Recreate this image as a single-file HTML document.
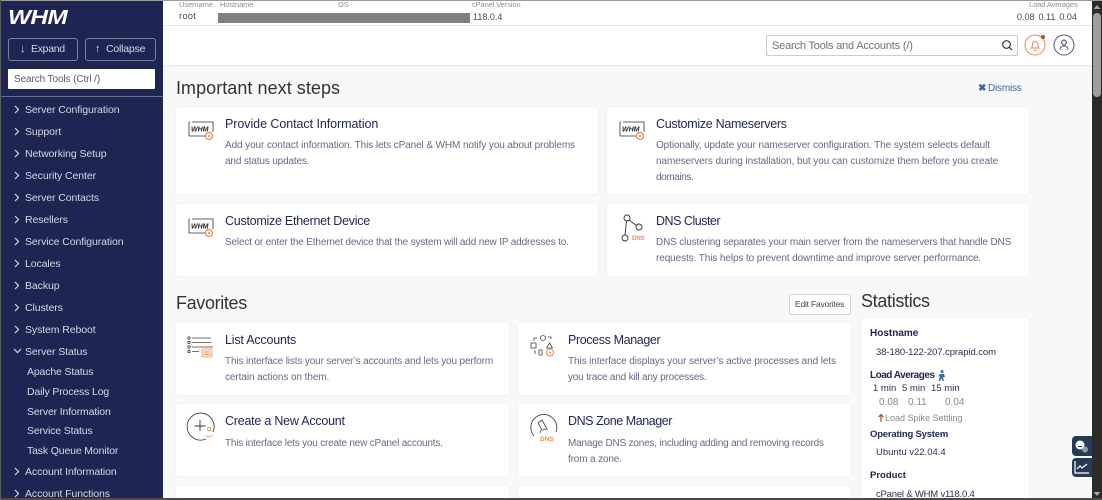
<!DOCTYPE html>
<html><head><meta charset="utf-8"><style>
html,body{margin:0;padding:0;width:1102px;height:500px;overflow:hidden;background:#f8f8f8}
body{font-family:"Liberation Sans",sans-serif;position:relative}
.a{position:absolute}
.t{position:absolute;white-space:nowrap;line-height:16px}
.s{font-size:10.5px;letter-spacing:-.09px;color:#d5d7e4;left:25px}
.u{font-size:10.5px;letter-spacing:-.15px;color:#d5d7e4;left:27px}
.card{position:absolute;background:#fff;border-radius:3px;box-shadow:0 0 3px rgba(0,0,0,.05)}
.h{font-size:12.5px;color:#1f2553}
.d{font-size:10px;letter-spacing:-.13px;color:#646a86}
.l{font-size:7.5px;color:#8d8d8d;letter-spacing:-.1px;top:-3px}
.st{font-size:9.5px;color:#2c3050}
.sb{font-size:10px;color:#1f2553;font-weight:bold}
svg{position:absolute;overflow:visible}
</style></head><body>
<!-- sidebar -->
<div class="a" style="left:0;top:0;width:163px;height:500px;background:#1f2553"></div>
<div class="t" style="left:8px;top:6px;font-size:20px;line-height:24px;font-weight:bold;font-style:italic;color:#fff;letter-spacing:-.5px;transform:scaleX(1.22);transform-origin:left">WHM</div>
<div class="a" style="left:8px;top:38px;width:68px;height:21px;border:1px solid #79809f;border-radius:3px"></div>
<div class="a" style="left:85px;top:38px;width:69px;height:21px;border:1px solid #79809f;border-radius:3px"></div>
<div class="t" style="left:20px;top:41px;font-size:11px;color:#d5d7e4">↓</div>
<div class="t" style="left:31px;top:41px;font-size:10.5px;color:#d5d7e4;letter-spacing:-.3px">Expand</div>
<div class="t" style="left:95px;top:41px;font-size:11px;color:#d5d7e4">↑</div>
<div class="t" style="left:106px;top:41px;font-size:10.5px;color:#d5d7e4;letter-spacing:-.2px">Collapse</div>
<div class="a" style="left:8px;top:69px;width:147px;height:20px;background:#fff;border-radius:1px"></div>
<div class="t" style="left:14px;top:72px;font-size:10px;color:#555a73;letter-spacing:-.1px">Search Tools (Ctrl /)</div>
<div class="a" style="left:0;top:96px;width:163px;height:1px;background:#6a7092"></div>
<svg width="163" height="500" style="left:0;top:0" fill="none" stroke="#d5d7e4" stroke-width="1.200">
<path d="M15 106l3.500 3.500-3.500 3.500M15 128l3.500 3.500-3.500 3.500M15 150l3.500 3.500-3.500 3.500M15 172l3.500 3.500-3.500 3.500M15 194l3.500 3.500-3.500 3.500M15 216l3.500 3.500-3.500 3.500M15 238l3.500 3.500-3.500 3.500M15 260l3.500 3.500-3.500 3.500M15 282l3.500 3.500-3.500 3.500M15 304l3.500 3.500-3.500 3.500M15 326l3.500 3.500-3.500 3.500M14 349l3.500 3.500 3.500-3.500M15 468l3.500 3.500-3.500 3.500M15 490l3.500 3.500-3.500 3.500"/>
</svg>
<div class="t s" style="top:102px">Server Configuration</div>
<div class="t s" style="top:124px">Support</div>
<div class="t s" style="top:146px">Networking Setup</div>
<div class="t s" style="top:168px">Security Center</div>
<div class="t s" style="top:190px">Server Contacts</div>
<div class="t s" style="top:212px">Resellers</div>
<div class="t s" style="top:234px">Service Configuration</div>
<div class="t s" style="top:256px">Locales</div>
<div class="t s" style="top:278px">Backup</div>
<div class="t s" style="top:300px">Clusters</div>
<div class="t s" style="top:322px">System Reboot</div>
<div class="t s" style="top:344px">Server Status</div>
<div class="t u" style="top:364px">Apache Status</div>
<div class="t u" style="top:384px">Daily Process Log</div>
<div class="t u" style="top:404px">Server Information</div>
<div class="t u" style="top:423px">Service Status</div>
<div class="t u" style="top:443px">Task Queue Monitor</div>
<div class="t s" style="top:464px">Account Information</div>
<div class="t s" style="top:486px">Account Functions</div>

<!-- top bar -->
<div class="a" style="left:163px;top:0;width:929px;height:65px;background:#fff;box-shadow:0 1px 2px rgba(0,0,0,.07)"></div>
<div class="a" style="left:163px;top:25px;width:929px;height:1px;background:#e8e8e8"></div>
<div class="t l" style="left:179px">Username</div>
<div class="t l" style="left:220px">Hostname</div>
<div class="t l" style="left:338px">OS</div>
<div class="t l" style="left:472px">cPanel Version</div>
<div class="t l" style="left:1029px">Load Averages</div>
<div class="t" style="left:179px;top:9px;font-size:9.500px;color:#4a4a4a;letter-spacing:.15px">root</div>
<div class="a" style="left:218px;top:13px;width:252px;height:10px;background:#808080"></div>
<div class="t" style="left:473px;top:9px;font-size:9px;color:#4a4a4a">118.0.4</div>
<div class="t" style="left:1017px;top:9px;font-size:9px;color:#4a4a4a;word-spacing:1.500px">0.08 0.11 0.04</div>

<div class="a" style="left:766px;top:35px;width:250px;height:19px;background:#fff;border:1px solid #c9cbd3;border-radius:2px"></div>
<div class="t" style="left:772px;top:38px;font-size:11px;color:#6f6f78;letter-spacing:-.18px">Search Tools and Accounts (/)</div>
<svg width="12" height="12" style="left:1001px;top:39px" fill="none" stroke="#333" stroke-width="1.200"><circle cx="5.500" cy="5.500" r="3.800"/><path d="M8.300 8.300l2.700 2.700"/></svg>
<svg width="24" height="24" style="left:1024px;top:34px" fill="none"><circle cx="11" cy="11" r="10" stroke="#e8875a" stroke-width="1"/><path d="M7.500 14c1-1 1-2 1-4a2.700 2.700 0 015.400 0c0 2 0 3 1 4z M10 15.500a1.300 1.300 0 002.500 0" stroke="#e8875a" stroke-width="1"/><circle cx="19" cy="3" r="2" fill="#a0522d"/></svg>
<svg width="24" height="24" style="left:1053px;top:34px" fill="none" stroke="#4e5475"><circle cx="11" cy="11" r="10" stroke-width="1"/><circle cx="11" cy="8.500" r="2.400" stroke-width="1.100"/><path d="M7 15.500c.5-3 2-3.500 4-3.500s3.500.5 4 3.500" stroke-width="1.100"/></svg>

<!-- important next steps -->
<div class="t" style="left:176px;top:76px;font-size:18px;line-height:24px;color:#333;letter-spacing:.05px">Important next steps</div>
<div class="t" style="left:978px;top:81px;font-size:10px;color:#3d6a9e;font-weight:bold">✖</div>
<div class="t" style="left:988px;top:81px;font-size:10px;color:#3d6a9e;letter-spacing:-.2px">Dismiss</div>

<div class="card" style="left:176px;top:107px;width:422px;height:87px"></div>
<div class="card" style="left:607px;top:107px;width:422px;height:87px"></div>
<div class="card" style="left:176px;top:204px;width:422px;height:72px"></div>
<div class="card" style="left:607px;top:204px;width:422px;height:72px"></div>

<!-- whm icons -->
<svg width="30" height="30" style="left:188px;top:120px" fill="none"><path d="M1 2v14h19M1 2h1M4 2h21v10" stroke="#333" stroke-width=".8"/><text x="3" y="11.500" font-size="7" font-style="italic" font-weight="bold" fill="#222" font-family="Liberation Sans">WHM</text><circle cx="21" cy="16" r="3.500" stroke="#ee8a55" stroke-width="1.300" fill="#fff"/><circle cx="21" cy="16" r="1" fill="#ee8a55"/></svg>
<svg width="30" height="30" style="left:188px;top:217px" fill="none"><path d="M1 2v14h19M1 2h1M4 2h21v10" stroke="#333" stroke-width=".8"/><text x="3" y="11.500" font-size="7" font-style="italic" font-weight="bold" fill="#222" font-family="Liberation Sans">WHM</text><circle cx="21" cy="16" r="3.500" stroke="#ee8a55" stroke-width="1.300" fill="#fff"/><circle cx="21" cy="16" r="1" fill="#ee8a55"/></svg>
<svg width="30" height="30" style="left:619px;top:120px" fill="none"><path d="M1 2v14h19M1 2h1M4 2h21v10" stroke="#333" stroke-width=".8"/><text x="3" y="11.500" font-size="7" font-style="italic" font-weight="bold" fill="#222" font-family="Liberation Sans">WHM</text><circle cx="21" cy="16" r="3.500" stroke="#ee8a55" stroke-width="1.300" fill="#fff"/><circle cx="21" cy="16" r="1" fill="#ee8a55"/></svg>
<svg width="30" height="32" style="left:620px;top:212px" fill="none" stroke="#333" stroke-width=".9"><circle cx="7" cy="6" r="3"/><circle cx="19" cy="15" r="3"/><circle cx="5" cy="26" r="3"/><path d="M9 8l7.500 5.500M6.500 9L5 23"/><text x="12" y="28" font-size="6" font-weight="bold" fill="#ee8a55" stroke="none" font-family="Liberation Sans">DNS</text></svg>

<div class="t h" style="left:225px;top:116px;letter-spacing:-.06px">Provide Contact Information</div>
<div class="t d" style="left:225px;top:138px;letter-spacing:-.1px">Add your contact information. This lets cPanel &amp; WHM notify you about problems</div>
<div class="t d" style="left:225px;top:154px;letter-spacing:-.15px">and status updates.</div>
<div class="t h" style="left:656px;top:116px;letter-spacing:-.29px">Customize Nameservers</div>
<div class="t d" style="left:656px;top:138px;letter-spacing:-.1px">Optionally, update your nameserver configuration. The system selects default</div>
<div class="t d" style="left:656px;top:154px;letter-spacing:-.09px">nameservers during installation, but you can customize them before you create</div>
<div class="t d" style="left:656px;top:170px;letter-spacing:-.4px">domains.</div>
<div class="t h" style="left:225px;top:213px;letter-spacing:-.26px">Customize Ethernet Device</div>
<div class="t d" style="left:225px;top:235px;letter-spacing:-.16px">Select or enter the Ethernet device that the system will add new IP addresses to.</div>
<div class="t h" style="left:656px;top:213px;letter-spacing:-.49px">DNS Cluster</div>
<div class="t d" style="left:656px;top:235px;letter-spacing:-.15px">DNS clustering separates your main server from the nameservers that handle DNS</div>
<div class="t d" style="left:656px;top:251px;letter-spacing:-.1px">requests. This helps to prevent downtime and improve server performance.</div>

<!-- favorites -->
<div class="t" style="left:176px;top:291px;font-size:18px;line-height:24px;color:#333;letter-spacing:-.35px">Favorites</div>
<div class="a" style="left:789px;top:294px;width:60px;height:19px;background:#fff;border:1px solid #d5d5d5;border-radius:2px"></div>
<div class="t" style="left:795px;top:296px;font-size:8.500px;color:#444;letter-spacing:-.2px">Edit Favorites</div>

<div class="card" style="left:176px;top:322px;width:333px;height:73px"></div>
<div class="card" style="left:518px;top:322px;width:333px;height:73px"></div>
<div class="card" style="left:176px;top:404px;width:333px;height:72px"></div>
<div class="card" style="left:518px;top:404px;width:333px;height:72px"></div>
<div class="card" style="left:176px;top:486px;width:333px;height:14px"></div>
<div class="card" style="left:518px;top:486px;width:333px;height:14px"></div>

<svg width="30" height="30" style="left:187px;top:336px" fill="none" stroke="#444" stroke-width=".8"><circle cx="2" cy="2" r="1.200"/><circle cx="2" cy="6.500" r="1.200"/><circle cx="2" cy="11" r="1.200"/><circle cx="2" cy="15.500" r="1.200"/><path d="M5 2h19M5 6.500h19M5 11h21M5 15.500h7"/><rect x="15" y="13" width="10" height="8" rx="1" stroke="#ee9a6e" fill="#fbe3d4"/><path d="M17 16h6M17 18.500h6" stroke="#ee8a55"/></svg>
<svg width="30" height="30" style="left:186px;top:413px" fill="none"><path d="M20 26a13.500 13.500 0 1 1 7-7" stroke="#444" stroke-width=".9"/><path d="M14 7v11M8.500 13h11" stroke="#333" stroke-width=".9"/><circle cx="23" cy="16" r="1.700" stroke="#ee8a55" stroke-width=".8"/><path d="M19.500 22c0 2 7 2 7 0" stroke="#ee8a55" stroke-width=".8"/></svg>
<svg width="30" height="30" style="left:530px;top:334px" fill="none" stroke="#444" stroke-width=".8"><circle cx="13" cy="4" r="2.500"/><rect x="1" y="9" width="5" height="5"/><path d="M19.500 9l3 5h-6z M4 7V4h3M18 3h3v2M5 20v-3h-1M9 21h3v-5H9z"/><circle cx="20" cy="18.500" r="3.500" stroke="#ee8a55" stroke-width="1.100"/><circle cx="20" cy="18.500" r="1" fill="#ee8a55" stroke="none"/></svg>
<svg width="30" height="30" style="left:529px;top:414px" fill="none"><path d="M5 22A13 13 0 1 1 27 18" stroke="#444" stroke-width=".9"/><path d="M9 9l4-3 5 9-5 1z M12 16l-1 3" stroke="#444" stroke-width=".8"/><text x="11" y="27" font-size="6.500" font-weight="bold" fill="#ee8a55" font-family="Liberation Sans">DNS</text></svg>

<div class="t h" style="left:225px;top:332px;letter-spacing:-.2px">List Accounts</div>
<div class="t d" style="left:225px;top:354px;letter-spacing:-.14px">This interface lists your server’s accounts and lets you perform</div>
<div class="t d" style="left:225px;top:370px;letter-spacing:-.08px">certain actions on them.</div>
<div class="t h" style="left:568px;top:332px;letter-spacing:-.38px">Process Manager</div>
<div class="t d" style="left:568px;top:354px;letter-spacing:-.1px">This interface displays your server’s active processes and lets</div>
<div class="t d" style="left:568px;top:370px;letter-spacing:-.2px">you trace and kill any processes.</div>
<div class="t h" style="left:225px;top:413px;letter-spacing:-.23px">Create a New Account</div>
<div class="t d" style="left:225px;top:436px;letter-spacing:-.2px">This interface lets you create new cPanel accounts.</div>
<div class="t h" style="left:568px;top:413px;letter-spacing:-.45px">DNS Zone Manager</div>
<div class="t d" style="left:568px;top:436px;letter-spacing:-.2px">Manage DNS zones, including adding and removing records</div>
<div class="t d" style="left:568px;top:452px;letter-spacing:-.15px">from a zone.</div>

<!-- statistics -->
<div class="t" style="left:861px;top:289px;font-size:18px;line-height:24px;color:#333;letter-spacing:-.33px">Statistics</div>
<div class="card" style="left:861px;top:318px;width:168px;height:182px"></div>
<div class="t sb" style="left:870px;top:326px;font-size:10px">Hostname</div>
<div class="t st" style="left:876px;top:345px;letter-spacing:-.08px">38-180-122-207.cprapid.com</div>
<div class="t sb" style="left:870px;top:368px;letter-spacing:-.5px">Load Averages</div>
<svg width="10" height="12" style="left:937px;top:370px" fill="#3d6a9e"><circle cx="5" cy="1.500" r="1.500"/><path d="M3 4h4l1 3-2 .5 1 3.500H5.500L4.500 8 3 11H1.500l1.500-5-2 .5z"/></svg>
<div class="t st" style="left:873px;top:381px">1 min</div>
<div class="t st" style="left:902px;top:381px">5 min</div>
<div class="t st" style="left:931px;top:381px">15 min</div>
<div class="t" style="left:879px;top:395px;font-size:10px;color:#888">0.08</div>
<div class="t" style="left:908px;top:395px;font-size:10px;color:#888">0.11</div>
<div class="t" style="left:945px;top:395px;font-size:10px;color:#888">0.04</div>
<svg width="8" height="10" style="left:877px;top:413px" fill="none" stroke="#b5553a" stroke-width="1.300"><path d="M4 9V1.500M1.500 4L4 1.500 6.500 4"/></svg>
<div class="t" style="left:885px;top:410px;font-size:9px;color:#8a8a8a">Load Spike Settling</div>
<div class="t sb" style="left:870px;top:427px;font-size:9.500px;letter-spacing:-.2px">Operating System</div>
<div class="t st" style="left:876px;top:445px">Ubuntu v22.04.4</div>
<div class="t sb" style="left:870px;top:468px;font-size:9.500px">Product</div>
<div class="t st" style="left:876px;top:487px;letter-spacing:-.2px">cPanel &amp; WHM v118.0.4</div>

<!-- side widgets -->
<div class="a" style="left:1072px;top:436px;width:20px;height:20px;background:#263a55;border-radius:4px 0 0 4px"></div>
<div class="a" style="left:1072px;top:458px;width:20px;height:19px;background:#263a55;border-radius:4px 0 0 4px"></div>
<svg width="20" height="20" style="left:1072px;top:436px"><circle cx="8" cy="9" r="4.500" fill="#fff"/><path d="M6 10.500h4" stroke="#263a55"/><circle cx="13" cy="13.500" r="3" fill="#8f9bad"/></svg>
<svg width="20" height="19" style="left:1072px;top:458px" fill="none" stroke="#fff" stroke-width="1.200"><path d="M3 3v12h14"/><path d="M5 11l3-3 2 2 5-4"/></svg>

<!-- scrollbar / frame -->
<div class="a" style="left:1092px;top:0;width:10px;height:500px;background:#2b2b2b"></div>
<div class="a" style="left:1093px;top:13px;width:8px;height:84px;background:#9f9f9f;border-radius:4px"></div>
<svg width="10" height="8" style="left:1092px;top:3px"><path d="M1.500 6l3.500-4 3.500 4z" fill="#a5a5a5"/></svg>
<svg width="10" height="8" style="left:1092px;top:490px"><path d="M1.500 2l3.500 4 3.500-4z" fill="#a5a5a5"/></svg>
<div class="a" style="left:0;top:0;width:1102px;height:1px;background:#9c9c9c"></div>
<div class="a" style="left:0;top:498px;width:1102px;height:2px;background:#4a4a4a"></div>
<div class="a" style="left:0;top:0;width:1px;height:500px;background:#5c5c5c"></div>
</body></html>
